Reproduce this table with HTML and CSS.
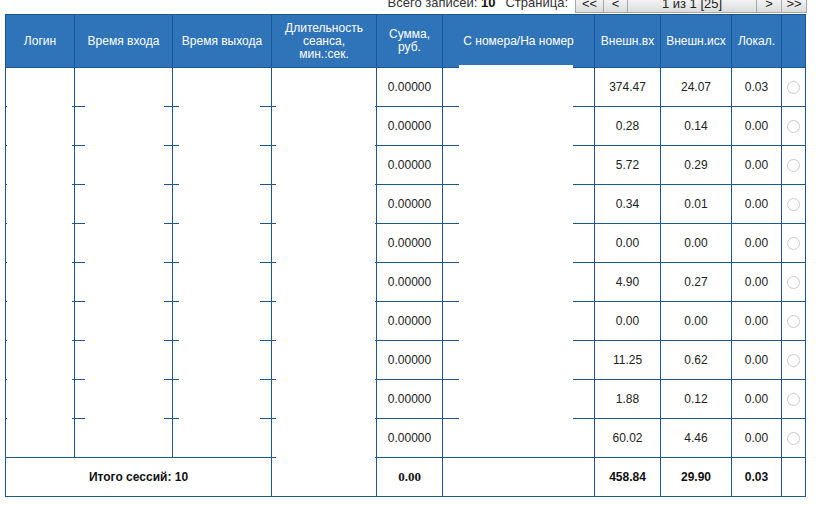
FILE: index.html
```html
<!DOCTYPE html>
<html lang="ru">
<head>
<meta charset="utf-8">
<title>Сессии</title>
<link rel="stylesheet" href="styles.css">
</head>
<body>
<div class="toolbar">
  <span class="total">Всего записей: <b>10</b></span>
  <span class="page-label">Страница:</span>
  <div class="pager">
    <span class="pbtn w29">&lt;&lt;</span>
    <span class="pbtn w24">&lt;</span>
    <span class="pbtn w129">1 из 1 [25]</span>
    <span class="pbtn w25">&gt;</span>
    <span class="pbtn w25">&gt;&gt;</span>
  </div>
</div>
<div class="grid-wrap">
  <table class="grid">
    <colgroup>
      <col class="c1"><col class="c2"><col class="c3"><col class="c4"><col class="c5">
      <col class="c6"><col class="c7"><col class="c8"><col class="c9"><col class="c10">
    </colgroup>
    <thead>
      <tr>
        <th>Логин</th>
        <th>Время входа</th>
        <th>Время выхода</th>
        <th>Длительность<br>сеанса,<br>мин.:сек.</th>
        <th>Сумма,<br>руб.</th>
        <th>С номера/На номер</th>
        <th>Внешн.вх</th>
        <th>Внешн.исх</th>
        <th>Локал.</th>
        <th></th>
      </tr>
    </thead>
    <tbody>
      <tr><td></td><td></td><td></td><td></td><td>0.00000</td><td></td><td>374.47</td><td>24.07</td><td>0.03</td><td><span class="radio"></span></td></tr>
      <tr><td></td><td></td><td></td><td></td><td>0.00000</td><td></td><td>0.28</td><td>0.14</td><td>0.00</td><td><span class="radio"></span></td></tr>
      <tr><td></td><td></td><td></td><td></td><td>0.00000</td><td></td><td>5.72</td><td>0.29</td><td>0.00</td><td><span class="radio"></span></td></tr>
      <tr><td></td><td></td><td></td><td></td><td>0.00000</td><td></td><td>0.34</td><td>0.01</td><td>0.00</td><td><span class="radio"></span></td></tr>
      <tr><td></td><td></td><td></td><td></td><td>0.00000</td><td></td><td>0.00</td><td>0.00</td><td>0.00</td><td><span class="radio"></span></td></tr>
      <tr><td></td><td></td><td></td><td></td><td>0.00000</td><td></td><td>4.90</td><td>0.27</td><td>0.00</td><td><span class="radio"></span></td></tr>
      <tr><td></td><td></td><td></td><td></td><td>0.00000</td><td></td><td>0.00</td><td>0.00</td><td>0.00</td><td><span class="radio"></span></td></tr>
      <tr><td></td><td></td><td></td><td></td><td>0.00000</td><td></td><td>11.25</td><td>0.62</td><td>0.00</td><td><span class="radio"></span></td></tr>
      <tr><td></td><td></td><td></td><td></td><td>0.00000</td><td></td><td>1.88</td><td>0.12</td><td>0.00</td><td><span class="radio"></span></td></tr>
      <tr><td></td><td></td><td></td><td></td><td>0.00000</td><td></td><td>60.02</td><td>4.46</td><td>0.00</td><td><span class="radio"></span></td></tr>
    </tbody>
    <tfoot>
      <tr>
        <td colspan="3">Итого сессий: 10</td>
        <td></td>
        <td class="serif">0.00</td>
        <td></td>
        <td>458.84</td>
        <td>29.90</td>
        <td>0.03</td>
        <td></td>
      </tr>
    </tfoot>
  </table>
  <div class="mask m-login"></div>
  <div class="mask m-in"></div>
  <div class="mask m-out"></div>
  <div class="mask m-dur"></div>
  <div class="mask m-num"></div>
</div>
</body>
</html>
```

FILE: styles.css
```css
html, body {
  margin: 0;
  padding: 0;
  background: #ffffff;
}
body {
  font-family: "Liberation Sans", Arial, sans-serif;
  font-size: 12px;
  color: #222;
  overflow: hidden;
}
.toolbar {
  display: flex;
  align-items: center;
  justify-content: flex-end;
  height: 20px;
  margin-top: -7px;
  margin-bottom: 1px;
  padding-right: 9px;
  width: 816px;
  box-sizing: border-box;
  font-size: 13px;
  color: #333;
}
.total {
  position: relative;
  top: -1px;
}
.total b {
  color: #111;
}
.page-label {
  margin-left: 10px;
  margin-right: 7px;
  position: relative;
  top: -1px;
}
.pager {
  display: flex;
  height: 20px;
}
.pbtn {
  display: flex;
  align-items: center;
  justify-content: center;
  height: 20px;
  box-sizing: border-box;
  border: 1px solid #a8a8a8;
  border-left: none;
  background: linear-gradient(#ffffff, #dcdcdc);
  color: #222;
  font-size: 13px;
  padding-top: 1px;
}
.pbtn:first-child { border-left: 1px solid #a8a8a8; }
.w29 { width: 29px; }
.w24 { width: 24px; }
.w129 { width: 129px; }
.w25 { width: 25px; }

.grid-wrap {
  position: relative;
  margin-left: 5px;
  width: 800px;
}
.grid {
  border-collapse: collapse;
  table-layout: fixed;
  width: 800px;
}
.c1 { width: 69px; }
.c2 { width: 98px; }
.c3 { width: 99px; }
.c4 { width: 105px; }
.c5 { width: 66px; }
.c6 { width: 152px; }
.c7 { width: 66px; }
.c8 { width: 71px; }
.c9 { width: 50px; }
.c10 { width: 24px; }

.grid th, .grid td {
  border: 1px solid #1c5794;
  padding: 0;
  text-align: center;
  vertical-align: middle;
}
.grid th {
  background: #2f74b9;
  color: #ffffff;
  font-weight: normal;
  line-height: 13px;
  height: 52px;
}
.grid td {
  height: 38px;
  color: #222;
}
.grid tfoot td {
  font-weight: bold;
  color: #111;
}
.grid tfoot td.serif {
  font-family: "Liberation Serif", "Times New Roman", serif;
  font-size: 13px;
}
.radio {
  display: inline-block;
  width: 13px;
  height: 13px;
  box-sizing: border-box;
  border: 1px solid #cbcbcb;
  border-radius: 50%;
  vertical-align: middle;
  margin-right: 1px;
}

.mask {
  position: absolute;
  background: #ffffff;
}
.m-login { left: 2px; width: 65px; top: 54px; height: 387px; }
.m-in { left: 80px; width: 79px; top: 54px; height: 387px; }
.m-out { left: 174px; width: 81px; top: 54px; height: 387px; }
.m-dur { left: 271px; width: 99px; top: 54px; height: 417px; }
.m-num { left: 454px; width: 114px; top: 51px; height: 387px; }
```
